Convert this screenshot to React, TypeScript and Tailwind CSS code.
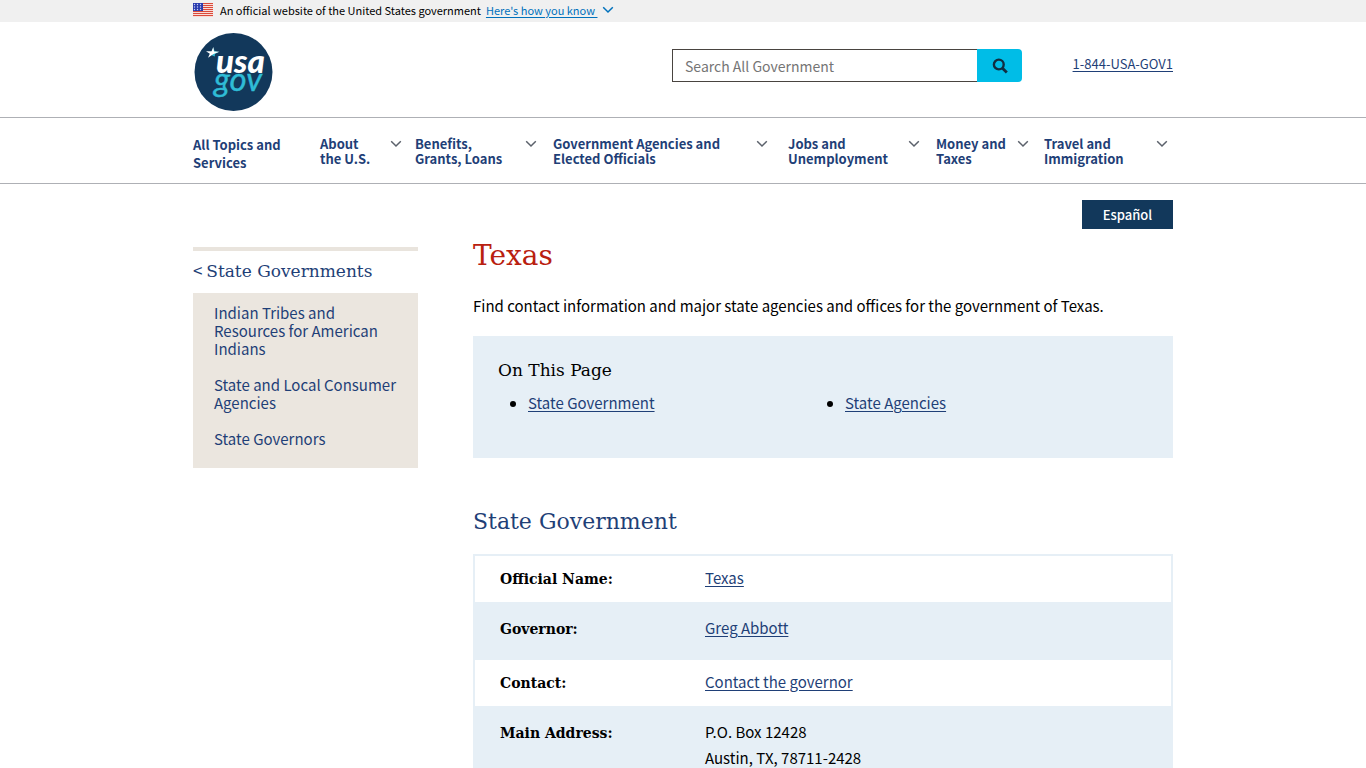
import { ReactNode } from "react";

const sans = "font-['Noto_Sans_CJK_SC','Noto_Sans',sans-serif]";
const serif = "font-['DejaVu_Serif',serif]";
const link = "text-[#1f3f77] underline underline-offset-2";

function Flag() {
  return (
    <svg width="20" height="14" viewBox="0 0 20 14" aria-hidden="true">
      <rect width="20" height="14" fill="#fff" />
      {[0, 2, 4, 6, 8, 10, 12].map((y) => (
        <rect key={y} y={y} width="20" height="1.2" fill="#db4a3a" />
      ))}
      <rect width="10" height="8" fill="#2a3cae" />
      {[1.5, 4, 6.5].map((y) =>
        [1.5, 4.5, 7.5].map((x) => <circle key={`${x}-${y}`} cx={x} cy={y} r="0.7" fill="#c9d0f2" />)
      )}
    </svg>
  );
}

function Chevron({ className }: { className: string }) {
  return (
    <svg className={className} width="12" height="8" viewBox="0 0 12 8" fill="none" stroke="currentColor" aria-hidden="true">
      <path d="M1.2 1.2 6 6l4.800-4.800" />
    </svg>
  );
}

function Logo() {
  return (
    <svg width="80" height="80" viewBox="0 0 80 80" role="img" aria-label="USAGov">
      <circle cx="40.500" cy="40" r="39" fill="#12385b" />
      <path d="M19 23.500 20.300 15.500 21.600 19 25.500 20 22 22 21.800 24.500Z" fill="#2fb7cf" />
      <path d="M13 19.200 18.500 19.300 20.300 15 21 19.500 26.500 19.800 20.500 22 15 25.800 16.800 21.800Z" fill="#fff" />
      <text x="23" y="41" fontFamily="Lato, sans-serif" fontSize="33" fontWeight="900" fontStyle="italic" fill="#fff">usa</text>
      <text x="21" y="59" fontFamily="Lato, sans-serif" fontSize="33" fontWeight="400" fontStyle="italic" fill="#2fbcd6" stroke="#2fbcd6" strokeWidth="0.4">gov</text>
    </svg>
  );
}

const menus: [string, string][] = [
  ["About", "the U.S."],
  ["Benefits,", "Grants, Loans"],
  ["Government Agencies and", "Elected Officials"],
  ["Jobs and", "Unemployment"],
  ["Money and", "Taxes"],
  ["Travel and", "Immigration"],
];
const menuPadding = ["pr-[13px]", "pr-4", "pr-5", "pr-4", "pr-[15px]", "pr-[5px]"];

function Row({ label, shaded, roomy, children }: { label: string; shaded?: boolean; roomy?: boolean; children: ReactNode }) {
  return (
    <tr className={shaded ? "bg-[#e6eff6]" : "bg-white"}>
      <th scope="row" className={`${serif} w-[206px] pl-[25px] text-left align-top text-[14px] leading-[26px] font-bold ${shaded ? "pt-3.5" : "pt-2.5"}`}>
        {label}
      </th>
      <td className={`pl-[25px] align-top leading-[26px] ${shaded ? "pt-[13px]" : "pt-[9px]"} ${roomy ? "pb-[19px]" : "pb-[11px]"}`}>{children}</td>
    </tr>
  );
}

export default function App() {
  return (
    <div className={`${sans} min-h-screen bg-white text-[15px] text-black`}>
      <div className="bg-[#f0f0f0]">
        <div className="mx-auto flex h-[22px] max-w-[980px] items-center pb-0.5 text-[11px]">
          <Flag />
          <span className="ml-[7px]">An official website of the United States government</span>
          <button type="button" className="ml-[5px] flex items-center text-[#0071bc]">
            <span className="whitespace-pre underline underline-offset-2">{"Here's how you know "}</span>
            <Chevron className="ml-1 stroke-[1.5]" />
          </button>
        </div>
      </div>

      <header>
        <div className="border-b border-[#aeb0b5]">
          <div className="mx-auto flex h-[95px] max-w-[980px] items-start">
            <a href="#home" className="mt-[10px]"><Logo /></a>
            <form className="mt-[27px] ml-auto flex h-[33px]" onSubmit={(e) => e.preventDefault()}>
              <input aria-label="Search All Government" placeholder="Search All Government" className="w-[305px] border border-r-0 border-[#494440] px-3 pt-px text-[14px] outline-none placeholder:text-[#757575]" />
              <button type="submit" aria-label="Search" className="flex w-[45px] items-center justify-center rounded-r-sm bg-[#00bde7]">
                <svg width="16" height="16" viewBox="0 0 16 16" fill="none" stroke="#112e41" aria-hidden="true">
                  <circle cx="6.800" cy="6.500" r="4.900" strokeWidth="2.400" />
                  <path d="m10.500 10.300 4.300 4.300" strokeWidth="2.800" />
                </svg>
              </button>
            </form>
            <a href="#phone" className="mt-8 w-[151px] text-right text-[13px] leading-5 text-[#1f3f77] underline underline-offset-2">1-844-USA-GOV1</a>
          </div>
        </div>

        <nav className="border-b border-[#aeb0b5]">
          <div className="mx-auto grid h-[65px] max-w-[980px] grid-cols-[127fr_95fr_138fr_235fr_148fr_108fr_129fr] pt-[18px] text-[13px] font-bold text-[#1f3f77]">
            <a href="#topics" className="leading-[18px]">All Topics and<br />Services</a>
            {menus.map(([a, b], i) => (
              <button key={a} type="button" className={`flex items-start justify-between text-left leading-[15px] whitespace-nowrap ${menuPadding[i]}`}>
                <span>{a}<br />{b}</span>
                <Chevron className="mt-1 shrink-0 stroke-[1.5] text-[#5b616b]" />
              </button>
            ))}
          </div>
        </nav>
      </header>

      <main className="mx-auto max-w-[980px] pt-4">
        <div className="flex justify-end">
          <button type="button" className="h-[29px] w-[91px] bg-[#12385b] text-[13px] font-medium text-white">Español</button>
        </div>
        <div className="flex gap-[55px]">
          <aside className="w-[225px] shrink-0 pt-[18px]">
            <h2 className="border-t-4 border-[#e9e4dd] pt-[5px] pb-[9px] text-[17px] leading-7 text-[#1f3f77]">
              <a href="#states" className="block h-7">&lt; <span className={serif}>State Governments</span></a>
            </h2>
            <ul className="flex flex-col gap-[18px] bg-[#ebe6df] pt-[11px] pr-3 pb-5 pl-[21px] leading-[18px] text-[#1f3f77]">
              <li><a href="#tribes">Indian Tribes and Resources for American Indians</a></li>
              <li><a href="#consumer">State and Local Consumer Agencies</a></li>
              <li><a href="#governors">State Governors</a></li>
            </ul>
          </aside>

          <div className="min-w-0 flex-1 pt-2">
            <h1 className={`${serif} text-[28px] leading-[38px] text-[#b9200f]`}>Texas</h1>
            <p className="pt-[18px] leading-[26px]">Find contact information and major state agencies and offices for the government of Texas.</p>
            <section className="mt-[17px] bg-[#e6eff6] px-[25px] pt-5 pb-[42px]">
              <h2 className={`${serif} text-[17px] leading-7`}>On This Page</h2>
              <ul className="grid list-disc grid-cols-2 gap-x-2 pt-1.5 leading-[26px]">
                <li className="ml-[30px]"><a href="#government" className={link}>State Government</a></li>
                <li className="ml-[18px]"><a href="#agencies" className={link}>State Agencies</a></li>
              </ul>
            </section>
            <h2 id="government" className={`${serif} pt-12 text-[22px] leading-8 text-[#1f3f77]`}>State Government</h2>
            <table className="mt-4 w-full border-2 border-[#e6eff6]">
              <tbody>
                <Row label="Official Name:"><a href="#texas" className={link}>Texas</a></Row>
                <Row label="Governor:" shaded roomy><a href="#governor" className={link}>Greg Abbott</a></Row>
                <Row label="Contact:"><a href="#contact" className={link}>Contact the governor</a></Row>
                <Row label="Main Address:" shaded>P.O. Box 12428<br />Austin, TX, 78711-2428</Row>
              </tbody>
            </table>
          </div>
        </div>
      </main>
    </div>
  );
}
